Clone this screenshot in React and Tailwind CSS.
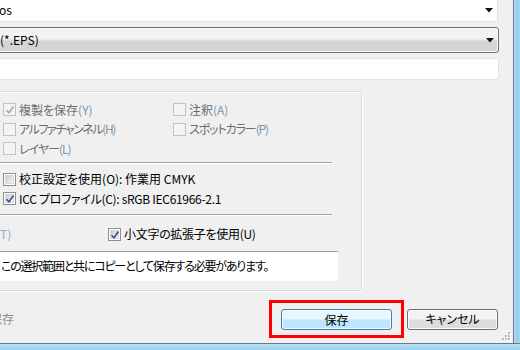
import React from "react";

function Check({ checked, disabled }) {
  return (
    <span
      className={`relative flex h-[13px] w-[13px] shrink-0 items-center justify-center border ${
        disabled ? "border-[#c2c2c2] bg-[#f4f4f4]" : "border-[#8e8f8f] bg-white"
      }`}
    >
      {!disabled && (
        <span className="h-[9px] w-[9px] border border-[#d6d8da] bg-gradient-to-br from-[#c9cdd2] to-[#f4f4f5]" />
      )}
      {checked && (
        <svg className="absolute left-[1px] top-[1px]" width="10" height="10" viewBox="0 0 10 10">
          <path
            d="M1.5 5.2 L4 7.8 L8.5 1.5"
            fill="none"
            stroke={disabled ? "#a7a7a7" : "#3c4f8c"}
            strokeWidth="1.6"
          />
        </svg>
      )}
    </span>
  );
}

function Mn({ children, dim }) {
  return <span className={dim ? "text-[#7f93ad]" : ""}>{children}</span>;
}

function Row({ children, className = "" }) {
  return <div className={`flex h-[19.5px] items-center ${className}`}>{children}</div>;
}

function Separator() {
  return (
    <div className="w-[337px]">
      <div className="h-px bg-[#a0a0a0]" />
      <div className="h-px bg-white" />
    </div>
  );
}

function Arrow() {
  return (
    <svg width="8" height="5" viewBox="0 0 8 5">
      <path d="M0 0 H8 L4 4.5 Z" fill="#111" />
    </svg>
  );
}

export default function App() {
  return (
    <div className="flex h-[350px] w-[520px] flex-col overflow-hidden bg-[#f0f0f0] font-['Noto_Sans_CJK_JP','Noto_Sans',sans-serif] text-[12px] leading-none text-black [font-feature-settings:'palt']">
      <div className="flex h-[343px]">
        {/* main dialog content */}
        <div className="relative flex w-[513px] flex-col">
          {/* combobox 1 */}
          <div className="ml-[-6px] flex h-[22px] w-[504px] items-center justify-between border border-t-0 border-[#dfe3e8] bg-white pl-[5px] pr-[4px]">
            <span className="-mt-[1px] ml-[-1px]">os</span>
            <Arrow />
          </div>
          {/* combobox 2 */}
          <div className="ml-[-6px] mt-[5px] flex h-[26px] w-[505px] items-center justify-between rounded-[3px] border border-[#707070] bg-gradient-to-b from-[#f2f2f2] from-[45%] to-[#d4d4d4] to-[55%] pl-[5px] pr-[4px] shadow-[inset_0_0_0_1px_#fbfbfb]">
            <span className="-mt-[1px]">(*.EPS)</span>
            <Arrow />
          </div>
          {/* input */}
          <div className="ml-[-6px] mt-[5px] h-[22px] w-[505px] rounded-[2px] border border-[#dfe3e8] bg-white" />

          {/* group box */}
          <div className="ml-[-6px] mt-[11px] h-[200px] w-[368px] rounded-[3px] border border-[#d5dfe5] shadow-[inset_1px_1px_0_#fff,1px_1px_0_#fff]">
            <div className="flex flex-col pl-[8px] pt-[8px]">
              <div className="grid grid-cols-[170px_1fr] text-[#6d6d6d]">
                <div>
                  <Row>
                    <Check checked disabled />
                    <span className="ml-[3px]">
                      複製を保存<Mn dim>(Y)</Mn>
                    </span>
                  </Row>
                  <Row>
                    <Check disabled />
                    <span className="ml-[3px] tracking-[-1.4px]">
                      アルファチャンネル<Mn dim>(H)</Mn>
                    </span>
                  </Row>
                  <Row>
                    <Check disabled />
                    <span className="ml-[3px] tracking-[-1px]">
                      レイヤー<Mn dim>(L)</Mn>
                    </span>
                  </Row>
                </div>
                <div>
                  <Row>
                    <Check disabled />
                    <span className="ml-[3px]">
                      注釈<Mn dim>(A)</Mn>
                    </span>
                  </Row>
                  <Row>
                    <Check disabled />
                    <span className="ml-[3px] tracking-[-1.1px]">
                      スポットカラー<Mn dim>(P)</Mn>
                    </span>
                  </Row>
                </div>
              </div>

              <div className="ml-[-8px] mt-[3px]">
                <Separator />
              </div>

              <div className="mt-[6px]">
                <Row>
                  <Check />
                  <span className="ml-[3px]">校正設定を使用(O): 作業用 CMYK</span>
                </Row>
                <Row>
                  <Check checked />
                  <span className="ml-[3px] tracking-[-0.3px]">ICC プロファイル(C): sRGB IEC61966-2.1</span>
                </Row>
              </div>

              <div className="ml-[-8px] mt-[5px]">
                <Separator />
              </div>

              <div className="ml-[-8px] mt-[9px] flex h-[19px] items-center">
                <span className="w-[113px] pl-[5px] text-[#7fb0d8]">T)</span>
                <Check checked />
                <span className="ml-[3px] tracking-[-0.3px]">小文字の拡張子を使用(U)</span>
              </div>

              <div className="ml-[-8px] mt-[7px] flex h-[30px] w-[343px] items-center border-t border-[#9c9c9c] bg-white pl-[6px]">
                <span className="mt-[-1px] tracking-[-1.2px]">この選択範囲と共にコピーとして保存する必要があります。</span>
              </div>
            </div>
          </div>

          {/* bottom buttons row */}
          <div className="mt-[9px] flex h-[38px] items-center">
            <span className="ml-[-10px] text-[#8d8d8d]">保存</span>
            <div className="flex-1" />
            <div className="border-[3px] border-[#ff0000] px-[9px] pb-[5px] pt-[6px]">
              <div className="flex h-[21px] w-[111px] items-center justify-center rounded-[3px] border border-[#3c7fb1] bg-gradient-to-b from-[#eaf6fd] from-[45%] to-[#bee6fd] to-[55%] shadow-[inset_0_0_0_1px_#f4fbfe]">
                保存
              </div>
            </div>
            <div className="ml-[3px] mr-[15px] flex h-[21px] w-[91px] items-center justify-center rounded-[3px] border border-[#707070] bg-gradient-to-b from-[#f2f2f2] from-[45%] to-[#dddddd] to-[55%] shadow-[inset_0_0_0_1px_#fbfbfb]">
              キャンセル
            </div>
          </div>

          {/* size grip */}
          <svg className="absolute bottom-[2px] right-[2px]" width="10" height="10" viewBox="0 0 10 10">
            {[
              [7, 1],
              [4, 4],
              [7, 4],
              [1, 7],
              [4, 7],
              [7, 7],
            ].map(([x, y], i) => (
              <g key={i}>
                <rect x={x + 1} y={y + 1} width="2" height="2" fill="#fff" />
                <rect x={x} y={y} width="2" height="2" fill="#b8b8b8" />
              </g>
            ))}
          </svg>
        </div>
        {/* right window frame */}
        <div className="w-px bg-[#707a86]" />
        <div className="flex-1 bg-gradient-to-r from-[#b7e0f6] via-[#8fcdf0] to-[#a8d8f4]" />
      </div>
      <div className="h-px bg-[#707a86]" />
      <div className="flex-1 bg-gradient-to-b from-[#b7e0f6] to-[#9ad2f2]" />
    </div>
  );
}
